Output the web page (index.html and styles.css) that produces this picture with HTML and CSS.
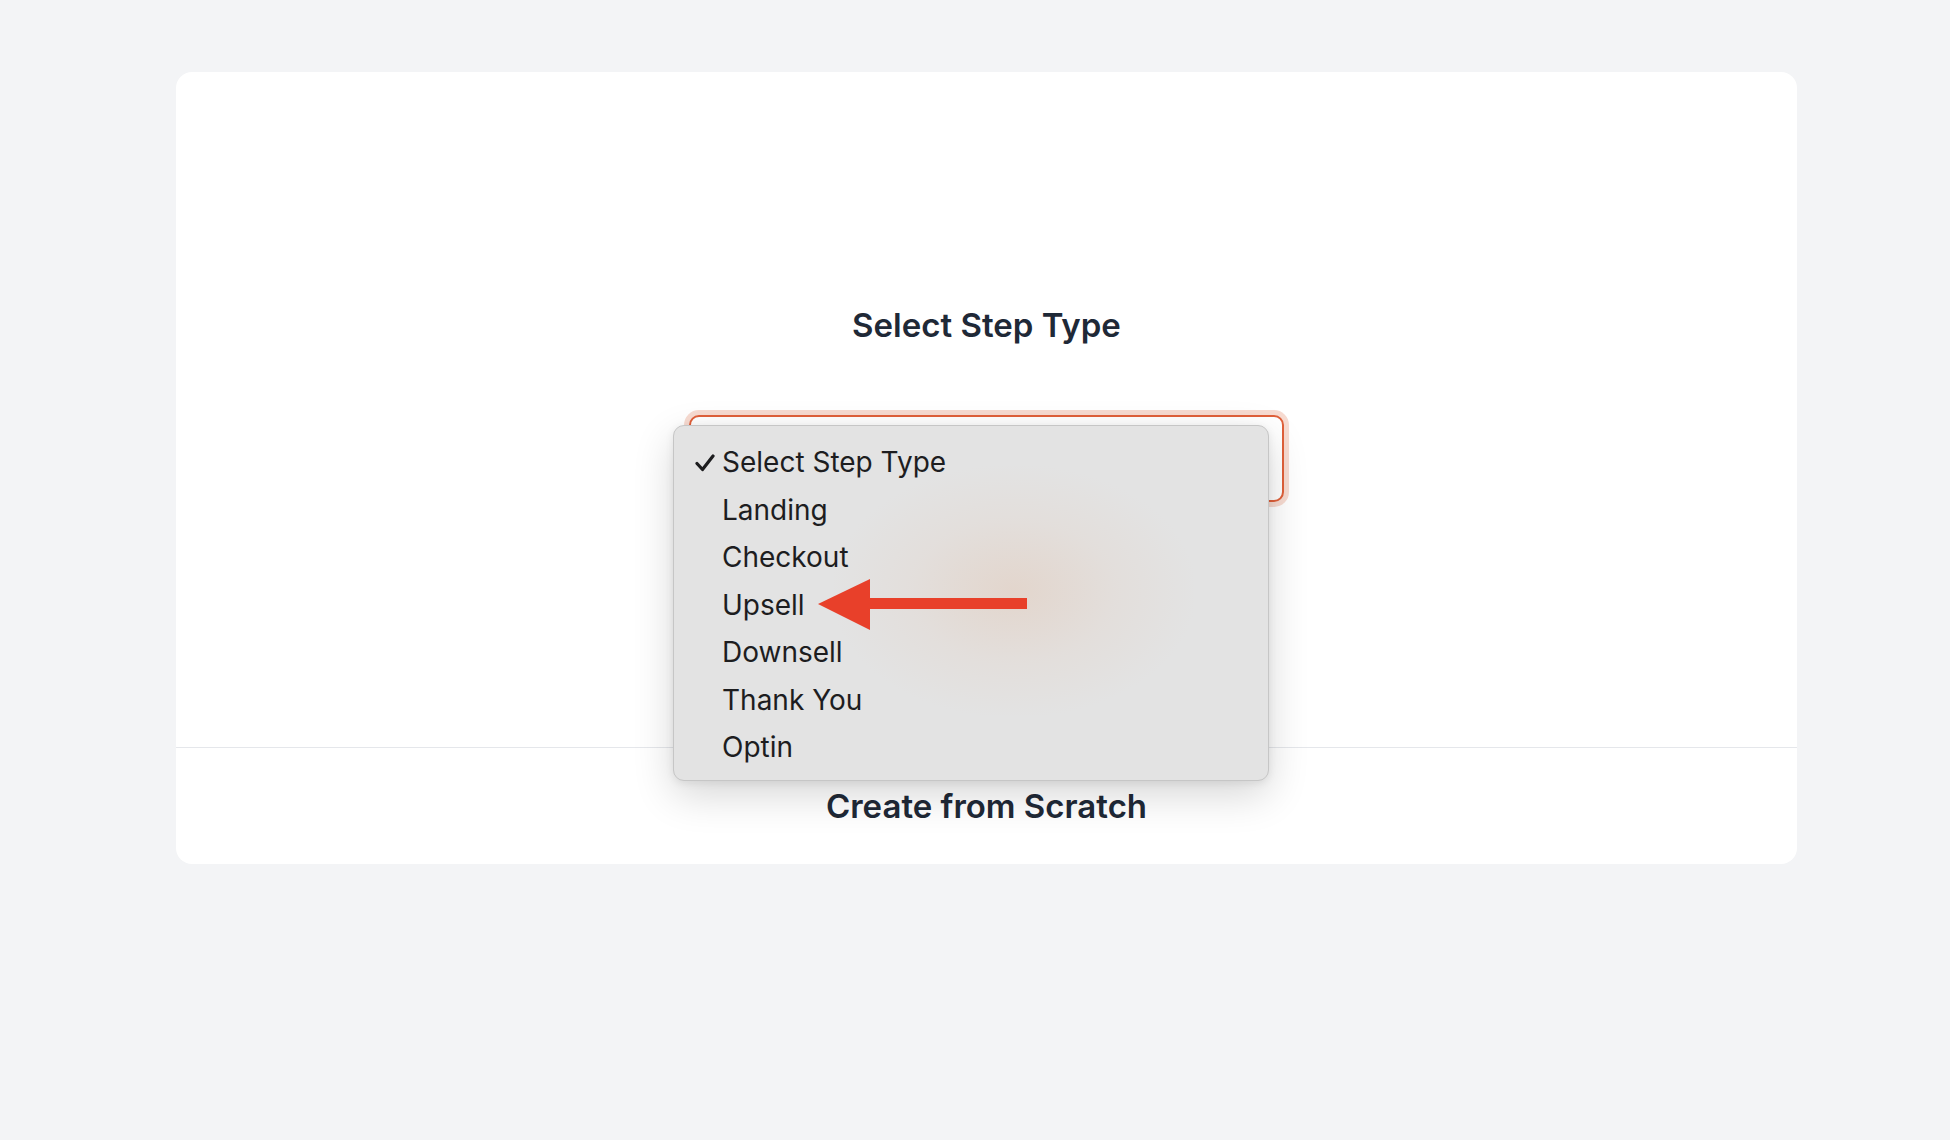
FILE: index.html
```html
<!DOCTYPE html>
<html lang="en">
<head>
    <meta charset="UTF-8">
    <meta name="viewport" content="width=device-width, initial-scale=1.0">
    <title>Select Step Type</title>
    <link rel="stylesheet" href="styles.css">
</head>
<body>
    <div class="page">
        <div class="card">
            <div class="card-body">
                <h2 class="title">Select Step Type</h2>

                <div class="select-wrap">
                    <div class="select-box"></div>

                    <!-- open native menu -->
                    <div class="menu">
                        <div class="menu-glow"></div>
                        <div class="menu-item selected">
                            <svg class="check" width="20" height="18" viewBox="0 0 20 18">
                                <path d="M2 9.5 L7.5 15.5 L18 2" fill="none" stroke="#1d1d1f" stroke-width="3.2" stroke-linecap="round" stroke-linejoin="round"/>
                            </svg>
                            Select Step Type
                        </div>
                        <div class="menu-item">Landing</div>
                        <div class="menu-item">Checkout</div>
                        <div class="menu-item">Upsell</div>
                        <div class="menu-item">Downsell</div>
                        <div class="menu-item">Thank You</div>
                        <div class="menu-item">Optin</div>

                        <svg class="pointer" width="215" height="52" viewBox="0 0 215 52">
                            <polygon points="0,25 52,0 52,51" fill="#e8402a"/>
                            <rect x="50" y="19" width="159" height="11" fill="#e8402a"/>
                        </svg>
                    </div>
                </div>
            </div>
            <div class="card-footer">
                <span class="footer-title">Create from Scratch</span>
            </div>
        </div>
    </div>
</body>
</html>
```

FILE: styles.css
```css
body {
    margin: 0;
    background-color: #f3f4f6;
    font-family: Inter, "Noto Sans", sans-serif;
}
.page {
    padding: 72px 0 0 176px;
}
.card {
    width: 1621px;
    background-color: #fff;
    border-radius: 16px;
}
.card-body {
    height: 442px;
    padding-top: 233px;
    display: flex;
    flex-direction: column;
    align-items: center;
}
.title {
    margin: 0;
    font-size: 33px;
    line-height: 40px;
    font-weight: 600;
    color: #1f2937;
}
.select-wrap {
    position: relative;
    margin-top: 70px;
}
.select-box {
    width: 591px;
    height: 83px;
    border: 2px solid #e0603a;
    border-radius: 10px;
    box-shadow: 0 0 0 5px #f7dbd1;
    background-color: #fff;
}
.menu {
    position: absolute;
    left: -16px;
    top: 10px;
    width: 594px;
    padding: 13px 0 8px;
    background-color: #e3e3e3;
    border: 1px solid #c6c6c6;
    border-radius: 11px;
    box-shadow: 0 14px 40px rgba(0, 0, 0, 0.16), 0 2px 8px rgba(0, 0, 0, 0.08);
    overflow: hidden;
}
.menu-glow {
    position: absolute;
    left: 160px;
    top: 40px;
    width: 360px;
    height: 250px;
    background: radial-gradient(ellipse at center, rgba(226, 200, 182, 0.5) 0%, rgba(227, 212, 202, 0.3) 40%, rgba(227, 227, 227, 0) 72%);
}
.menu-item {
    position: relative;
    height: 47.5px;
    line-height: 47.5px;
    padding-left: 48px;
    font-size: 28px;
    color: #1d1d1f;
}
.check {
    position: absolute;
    left: 21px;
    top: 15px;
}
.pointer {
    position: absolute;
    left: 144px;
    top: 153px;
}
.card-footer {
    height: 116px;
    border-top: 1px solid #e5e7eb;
    display: flex;
    align-items: center;
    justify-content: center;
}
.footer-title {
    font-size: 33px;
    font-weight: 600;
    color: #1f2937;
}
```
